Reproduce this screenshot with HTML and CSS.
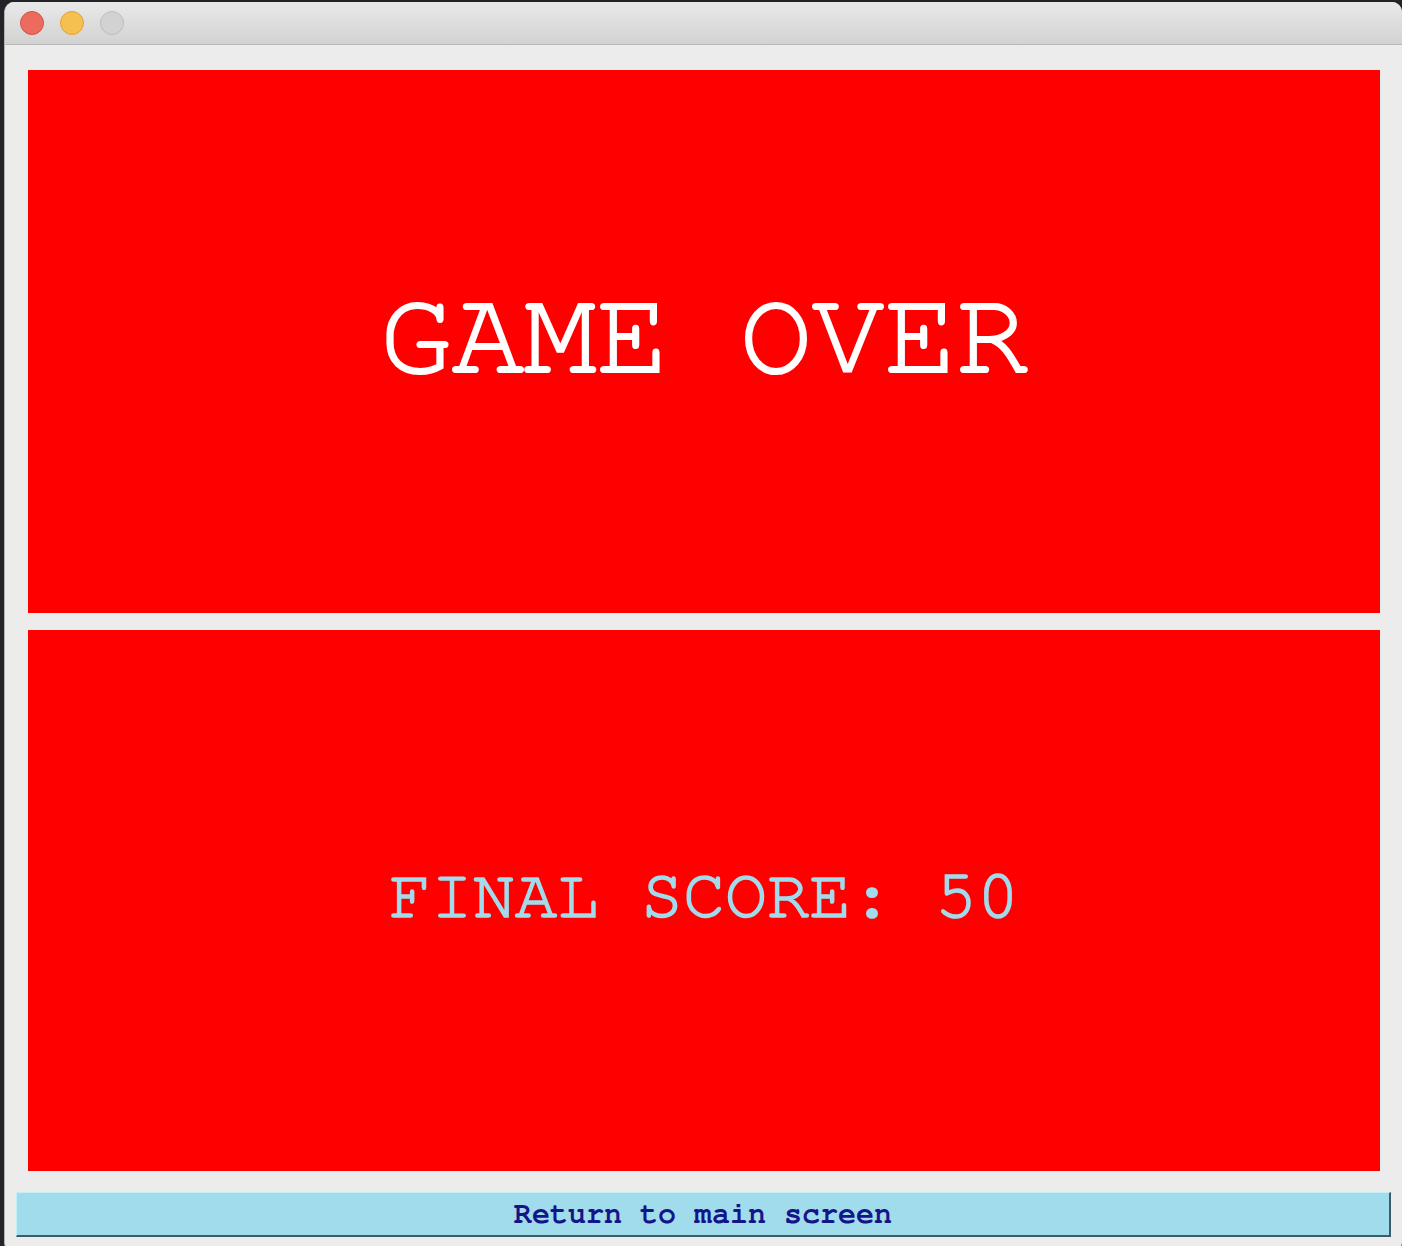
FILE: index.html
```html
<!DOCTYPE html>
<html>
<head>
<meta charset="utf-8">
<link rel="stylesheet" href="styles.css">
</head>
<body>
<div class="window">
  <div class="titlebar">
    <span class="light red"></span>
    <span class="light yellow"></span>
    <span class="light gray"></span>
  </div>
  <div class="content">
    <div class="panel"><span class="title">GAME OVER</span></div>
    <div class="panel panel2"><span class="score">FINAL SCORE: 50</span></div>
    <button class="return">Return to main screen</button>
  </div>
</div>
</body>
</html>
```

FILE: styles.css
```css
html, body {
  margin: 0;
  padding: 0;
  background: #222428;
  width: 1402px;
  height: 1246px;
  overflow: hidden;
}
.window {
  margin: 2px 0 0 4px;
  width: 1398px;
  height: 1252px;
  background: #ececec;
  border-radius: 10px 10px 12px 12px;
  border-left: 1px solid #b2b2b2;
  box-sizing: border-box;
  overflow: hidden;
  display: flex;
  flex-direction: column;
}
.titlebar {
  height: 42px;
  flex: none;
  background: linear-gradient(#e9e9e9, #d2d2d2);
  border-bottom: 1px solid #b6b6b6;
  display: flex;
  align-items: center;
  gap: 16px;
  padding-left: 15px;
  box-sizing: content-box;
}
.light {
  width: 24px;
  height: 24px;
  border-radius: 50%;
  box-sizing: border-box;
}
.red { background: #ec6a5e; border: 1px solid #d35248; }
.yellow { background: #f5c04f; border: 1px solid #dba43c; }
.gray { background: #d2d2d2; border: 1px solid #bcbcbc; }
.content {
  display: flex;
  flex-direction: column;
  padding-top: 25px;
}
.panel {
  margin-left: 23px;
  width: 1352px;
  height: 543px;
  background: #ff0000;
  display: flex;
  align-items: center;
  justify-content: center;
}
.panel2 {
  margin-top: 17px;
  height: 541px;
}
.title {
  font-family: "Nimbus Mono PS", "Nimbus Mono L", "FreeMono", "Courier 10 Pitch", "Liberation Mono", monospace;
  font-size: 120px;
  color: #ffffff;
  -webkit-text-stroke: 2.2px #ffffff;
  line-height: 1;
  margin-top: -12px;
}
.score {
  font-family: "Nimbus Mono PS", "Nimbus Mono L", "FreeMono", "Courier 10 Pitch", "Liberation Mono", monospace;
  font-size: 70px;
  color: #a2dbeb;
  -webkit-text-stroke: 1.6px #a2dbeb;
  line-height: 1;
  margin-top: -9px;
}
.return {
  margin: 21px 0 0 11px;
  width: 1375px;
  height: 45px;
  background: #a1dcec;
  border: 0;
  border-top: 1px solid #c4eef8;
  border-left: 1px solid #c4eef8;
  border-right: 2px solid #3e5c66;
  border-bottom: 2px solid #3e5c66;
  font-family: "Nimbus Mono PS", "Nimbus Mono L", "FreeMono", "Courier 10 Pitch", "Liberation Mono", monospace;
  font-weight: bold;
  font-size: 30px;
  color: #15158a;
  padding: 0 0 1px 0;
  line-height: 1;
}
```
